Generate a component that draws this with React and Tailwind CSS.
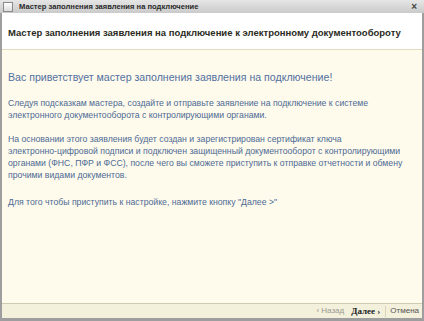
export default function App() {
  return (
    <div className="w-[424px] h-[321px] bg-[#9e9e9e] flex flex-col overflow-hidden" style={{ fontFamily: '"Liberation Sans", Arial, sans-serif' }}>
      <div className="h-[13px] flex items-center bg-gradient-to-b from-[#e6e6e6] to-[#cacaca] px-[3px] shrink-0">
        <div className="w-[10px] h-[10px] border border-[#8a8a8a] bg-gradient-to-b from-white to-[#dcdcdc] mr-[6px]"></div>
        <span className="text-[7.6px] font-bold text-[#2a2a2a] leading-none">Мастер заполнения заявления на подключение</span>
        <span className="ml-auto mr-[4px] text-[10px] font-bold text-[#444] leading-none">×</span>
      </div>
      <div className="flex-1 flex flex-col mx-[2px] mb-[3px] bg-white">
        <div className="h-[37px] shrink-0 bg-white border-b border-[#e2dbc0] flex items-center px-[6px] pt-[5px]">
          <span className="text-[9.5px] font-bold text-[#2b2b22] whitespace-nowrap">Мастер заполнения заявления на подключение к электронному документообороту</span>
        </div>
        <div className="flex-1 bg-[#fefaec] px-[6px] pt-[21px] text-[#4d6a94] whitespace-nowrap">
          <div className="text-[10.6px] leading-[13px] text-[#5270a0]">Вас приветствует мастер заполнения заявления на подключение!</div>
          <div className="mt-[13px] text-[8.7px] leading-[12px]">Следуя подсказкам мастера, создайте и отправьте заявление на подключение к системе<br />электронного документооборота с контролирующими органами.</div>
          <div className="mt-[12px] text-[8.7px] leading-[12px]">На основании этого заявления будет создан и зарегистрирован сертификат ключа<br />электронно-цифровой подписи и подключен защищенный документооборот с контролирующими<br />органами (ФНС, ПФР и ФСС), после чего вы сможете приступить к отправке отчетности и обмену<br />прочими видами документов.</div>
          <div className="mt-[15px] text-[8.7px] leading-[12px]">Для того чтобы приступить к настройке, нажмите кнопку "Далее &gt;"</div>
        </div>
        <div className="h-[15px] shrink-0 bg-[#f3f0dc] border-t border-[#cfcab0] flex items-center justify-end pr-[3px] text-[8px] leading-none">
          <span className="text-[#9a9a90] mr-[7px]">‹ Назад</span>
          <span className="font-bold text-[#222] mr-[5px] text-[9px]" style={{ fontFamily: '"Liberation Serif", serif' }}>Далее ›</span>
          <span className="w-px h-[11px] bg-[#d8d4bc] mr-[4px]"></span>
          <span className="text-[#555]">Отмена</span>
        </div>
      </div>
    </div>
  );
}
